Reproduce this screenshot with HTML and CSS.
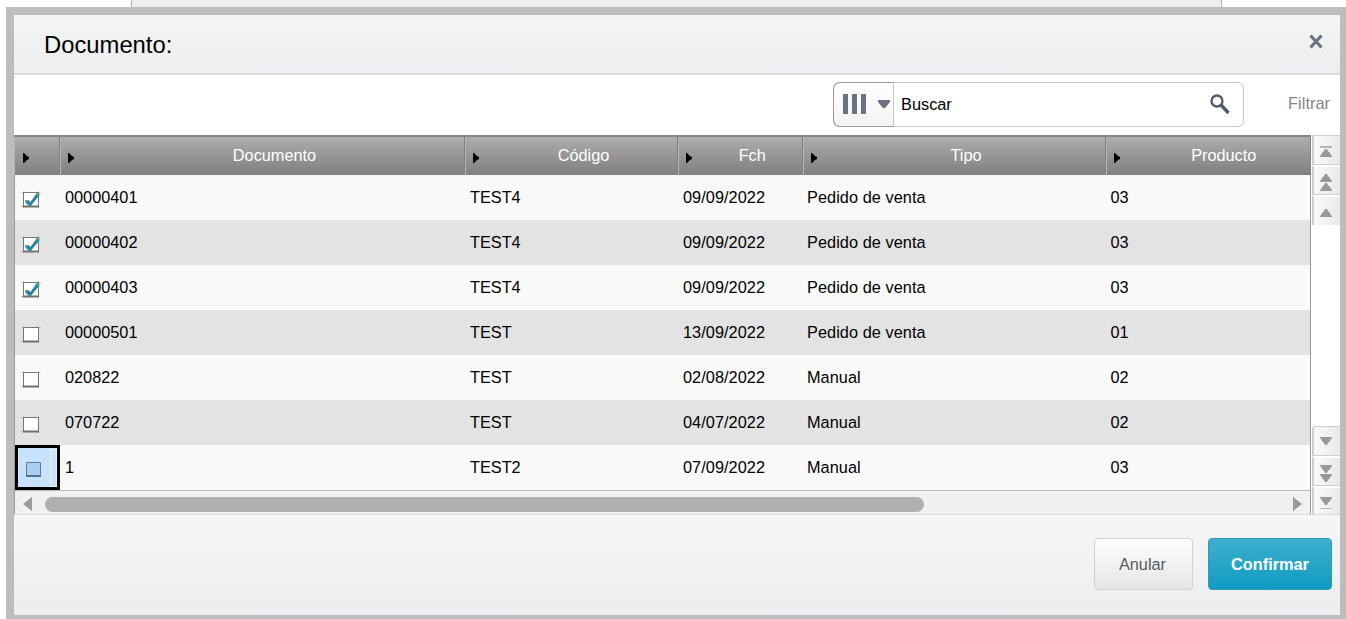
FILE: index.html
```
<!DOCTYPE html>
<html lang="es">
<head>
<meta charset="utf-8">
<title>Documento</title>
<link rel="stylesheet" href="styles.css">
</head>
<body>
<svg class="defs" width="0" height="0">
  <symbol id="box" viewBox="0 0 20 18"><path d="M2.500 1.500h15v14h-15z" fill="#fff"/><path d="M0 1.500h20M2.500 0v17M17.500 0v17" stroke="#aaa" opacity=".55"/><path d="M2 1.500h16M2.500 2v13M17.500 1v15" stroke="#777" fill="none"/><path d="M0 15.500h2" stroke="#bbb"/><path d="M2 15.500h16" stroke="#707070" stroke-width="2"/></symbol>
  <symbol id="checked" viewBox="0 0 20 18"><use href="#box"/><path d="M4 9h3.500l2 2L15.500 2h3v2.500l-6 7L10 15H7.500L4.500 12z" fill="#5aa88c"/><path d="M5.500 11h2l1.500 2.500L17 4" fill="none" stroke="#2a7fa5" stroke-width="2.200"/></symbol>
  <symbol id="up" viewBox="0 0 12 8"><path d="M5 0h2l1 2 2 2 1 2 1 1v1H0V7l1-1 1-2 2-2z" fill="#999"/></symbol>
  <symbol id="down" viewBox="0 0 12 8"><path d="M5 8h2l1-2 2-2 1-2 1-1V0H0v1l1 1 1 2 2 2z" fill="#999"/></symbol>
  <symbol id="sort" viewBox="0 0 6 10"><path d="M0 0h1l3 3 2 1v2l-2 1-3 3H0z" fill="#000"/></symbol>
</svg>
<div class="page">
  <div class="behind"></div>
  <div class="dialog">
    <header class="title"><h1>Documento:</h1>
      <svg class="close" width="14" height="15" viewBox="0 0 14 15"><path d="M1.500 1.500l11 12M12.500 1.500l-11 12" stroke="#697381" stroke-width="3.200"/></svg>
    </header>
    <div class="tools">
      <div class="search">
        <button class="cols"><svg width="48" height="21" viewBox="0 0 48 21"><path d="M0 0h5v20H0zM9 0h5v20H9zM18 0h5v20h-5z" fill="#6b7283"/><path d="M35 6h12v2l-5 6h-2l-5-6z" fill="#6b7283"/></svg></button>
        <span class="field">Buscar</span>
        <svg class="lens" width="20" height="21" viewBox="0 0 20 21"><circle cx="7" cy="7" r="5.500" fill="none" stroke="#4f5b6b" stroke-width="2.300"/><path d="M11 11l7.500 8" stroke="#4f5b6b" stroke-width="3.400"/></svg>
      </div>
      <span class="filter">Filtrar</span>
    </div>
    <div class="content">
      <div class="grid">
        <div class="row head">
          <span><svg><use href="#sort"/></svg></span>
          <span><svg><use href="#sort"/></svg><b>Documento</b></span>
          <span><svg><use href="#sort"/></svg><b>Código</b></span>
          <span><svg><use href="#sort"/></svg><b>Fch</b></span>
          <span><svg><use href="#sort"/></svg><b>Tipo</b></span>
          <span><svg><use href="#sort"/></svg><b>Producto</b></span>
        </div>
        <div class="row"><span><svg class="check"><use href="#checked"/></svg></span><span>00000401</span><span>TEST4</span><span class="date">09/09/2022</span><span class="kind">Pedido de venta</span><span>03</span></div>
        <div class="row alt"><span><svg class="check"><use href="#checked"/></svg></span><span>00000402</span><span>TEST4</span><span class="date">09/09/2022</span><span class="kind">Pedido de venta</span><span>03</span></div>
        <div class="row"><span><svg class="check"><use href="#checked"/></svg></span><span>00000403</span><span>TEST4</span><span class="date">09/09/2022</span><span class="kind">Pedido de venta</span><span>03</span></div>
        <div class="row alt"><span><svg class="check"><use href="#box"/></svg></span><span>00000501</span><span>TEST</span><span class="date">13/09/2022</span><span class="kind">Pedido de venta</span><span>01</span></div>
        <div class="row"><span><svg class="check"><use href="#box"/></svg></span><span>020822</span><span>TEST</span><span class="date">02/08/2022</span><span class="kind">Manual</span><span>02</span></div>
        <div class="row alt"><span><svg class="check"><use href="#box"/></svg></span><span>070722</span><span>TEST</span><span class="date">04/07/2022</span><span class="kind">Manual</span><span>02</span></div>
        <div class="row"><span class="active"><svg width="17" height="17" viewBox="0 0 17 17"><path d="M1.500 1.500h14v14h-14z" fill="#a9cff3" stroke="#5c7c9b"/><path d="M1 15h15" stroke="#4e7294" stroke-width="2"/></svg><i></i></span><span>1</span><span>TEST2</span><span class="date">07/09/2022</span><span class="kind">Manual</span><span>03</span></div>
        <div class="hscroll"><svg width="9" height="14" viewBox="0 0 9 14"><path d="M9 0v14L0 7z" fill="#999"/></svg><div class="track"><div class="thumb"></div></div><svg width="9" height="14" viewBox="0 0 9 14"><path d="M0 0v14l9-7z" fill="#999"/></svg></div>
      </div>
      <div class="nav">
        <div class="key"><i class="bar"></i><svg><use href="#up"/></svg></div>
        <div class="key"><svg><use href="#up"/></svg><svg><use href="#up"/></svg></div>
        <div class="key last"><svg><use href="#up"/></svg></div>
        <div class="space"></div>
        <div class="key first"><svg><use href="#down"/></svg></div>
        <div class="key"><svg><use href="#down"/></svg><svg><use href="#down"/></svg></div>
        <div class="key end"><svg><use href="#down"/></svg><i class="bar"></i></div>
      </div>
    </div>
    <footer class="actions"><button class="btn cancel">Anular</button><button class="btn ok">Confirmar</button></footer>
  </div>
</div>
</body>
</html>
```
FILE: styles.css
```
* { box-sizing: border-box; }
body { margin: 0; background: #fff; font: 16.3px "Liberation Sans", Arial, sans-serif; color: #000; }
.defs { position: absolute; }
svg { display: block; flex: none; }
button { font: inherit; margin: 0; }
.page { width: 1346px; height: 619px; overflow: hidden; }
.behind { height: 7px; margin-left: 131px; width: 1091px; background: #efefef; border: solid #b0b0b0; border-width: 0 1px; }
.dialog { margin-left: 6px; width: 1340px; height: 612px; border: solid #bdbdbd; border-width: 8px 6px 4px 8px; background: #fff; display: flex; flex-direction: column; }
.title { height: 60px; background: linear-gradient(#f4f6f5, #ecedf0); border-bottom: 2px solid #d9dbdd; display: flex; justify-content: space-between; align-items: center; padding: 0 17px 0 30px; }
.title h1 { margin: 2px 0 0; font-size: 23.8px; font-weight: 400; line-height: 28px; }
.close { margin-top: -6px; }
.tools { height: 60px; display: flex; justify-content: flex-end; align-items: flex-start; padding: 7px 10px 0 0; }
.search { width: 411px; height: 45px; border: 1px solid #c4c8c8; border-radius: 6px; display: flex; align-items: center; padding-right: 13px; margin-right: 44px; }
.cols { width: 61px; height: 45px; margin: 0 0 0 -1px; padding: 0 0 0 9px; border: 1px solid #999; border-right-color: #c4c8c8; border-radius: 7px 0 0 7px; background: linear-gradient(#fff, #f3f3f3); }
.field { flex: 1; padding-left: 7px; }
.lens { margin-top: 0; }
.filter { line-height: 42px; color: #858585; font-size: 16.4px; }
.content { height: 380px; display: flex; border-bottom: 1px solid #d8dada; }
.grid { width: 1297px; border: solid #999; border-width: 0 1px; background: #f9f9f9; }
.row { height: 45px; display: grid; grid-template-columns: 45px 405px 213px 124.500px 303px 204.500px; align-items: center; }
.row > span { padding-left: 5px; white-space: nowrap; line-height: 45px; }
.alt { background: #e3e3e3; }
.row > .date { letter-spacing: .05px; }
.row > .kind { letter-spacing: .06px; padding-left: 4.500px; }
.check { width: 20px; height: 18px; margin: 4px 0 0 1px; }
.head { height: 40px; margin-left: -1px; width: 1297px; grid-template-columns: 46px 405px 213px 124.500px 303px 205.500px; background: linear-gradient(#adadad, #7f7f7f); border-top: 2px solid #858585; color: #fff; }
.head > span { height: 38px; line-height: 37px; padding: 0; display: flex; border-left: 1px solid #b5b5b5; border-right: 1px solid #808080; }
.head svg { width: 6px; height: 10px; margin: 16px 0 0 7px; }
.head > span:first-child svg { margin-left: 8px; }
.head b { flex: 1; text-align: center; font-weight: 400; padding-left: 11px; }
.head > span:last-child b { padding-left: 18px; }
.row > .active { height: 45px; border: 3px solid #000; background: #c8e2fb; display: flex; align-items: center; justify-content: space-between; padding: 3px 0 0 7px; }
.active i { width: 7px; height: 38px; margin-top: -2px; border: 1px dotted #fff; }
.hscroll { height: 24px; background: #f0f0f0; border-top: 1px solid #bbb; display: flex; align-items: center; gap: 13px; padding: 4px 8px 1px; }
.track { flex: 1; }
.thumb { width: 879px; height: 15px; border-radius: 8px; background: #b0b0b0; }
.nav { flex: 1; display: flex; flex-direction: column; padding-left: 1px; }
.key { height: 30px; border: 1px solid #cecece; border-width: 1px 0 1px 2px; background: linear-gradient(90deg, #fafafa, #e6e8ec); display: flex; flex-direction: column; align-items: center; justify-content: center; gap: 1px; padding-right: 2px; }
.key + .key { border-top: 2px solid #fff; }
.key svg { width: 12px; height: 8px; }
.bar { width: 12px; height: 2px; background: #b5b5b5; }
.key .bar:first-child { margin: 2px 0 0; }
.key.last { border-bottom: 0; padding-top: 3px; }
.key + .key:not(.last):not(.end) { padding-top: 3px; }
.space { flex: 1; }
.key.first { border-top-left-radius: 4px; height: 30px; }
.key.end { height: 28px; border-bottom: 0; padding-top: 3px; }
.end .bar { height: 1px; margin: 2px 0 0; }
.actions { flex: 1; background: linear-gradient(#f5f7f6, #ecedf0); display: flex; justify-content: flex-end; gap: 15px; padding: 23px 8px 0 0; }
.btn { height: 52px; border-radius: 4px; }
.cancel { width: 99px; border: 1px solid #d0d2d2; background: linear-gradient(#fff, #e5e5e5); color: #555a62; padding-right: 8px; }
.ok { width: 124px; border: 1px solid #3299b4; background: linear-gradient(#3eb0ce, #109bc1); color: #fff; font-weight: 700; }
```
